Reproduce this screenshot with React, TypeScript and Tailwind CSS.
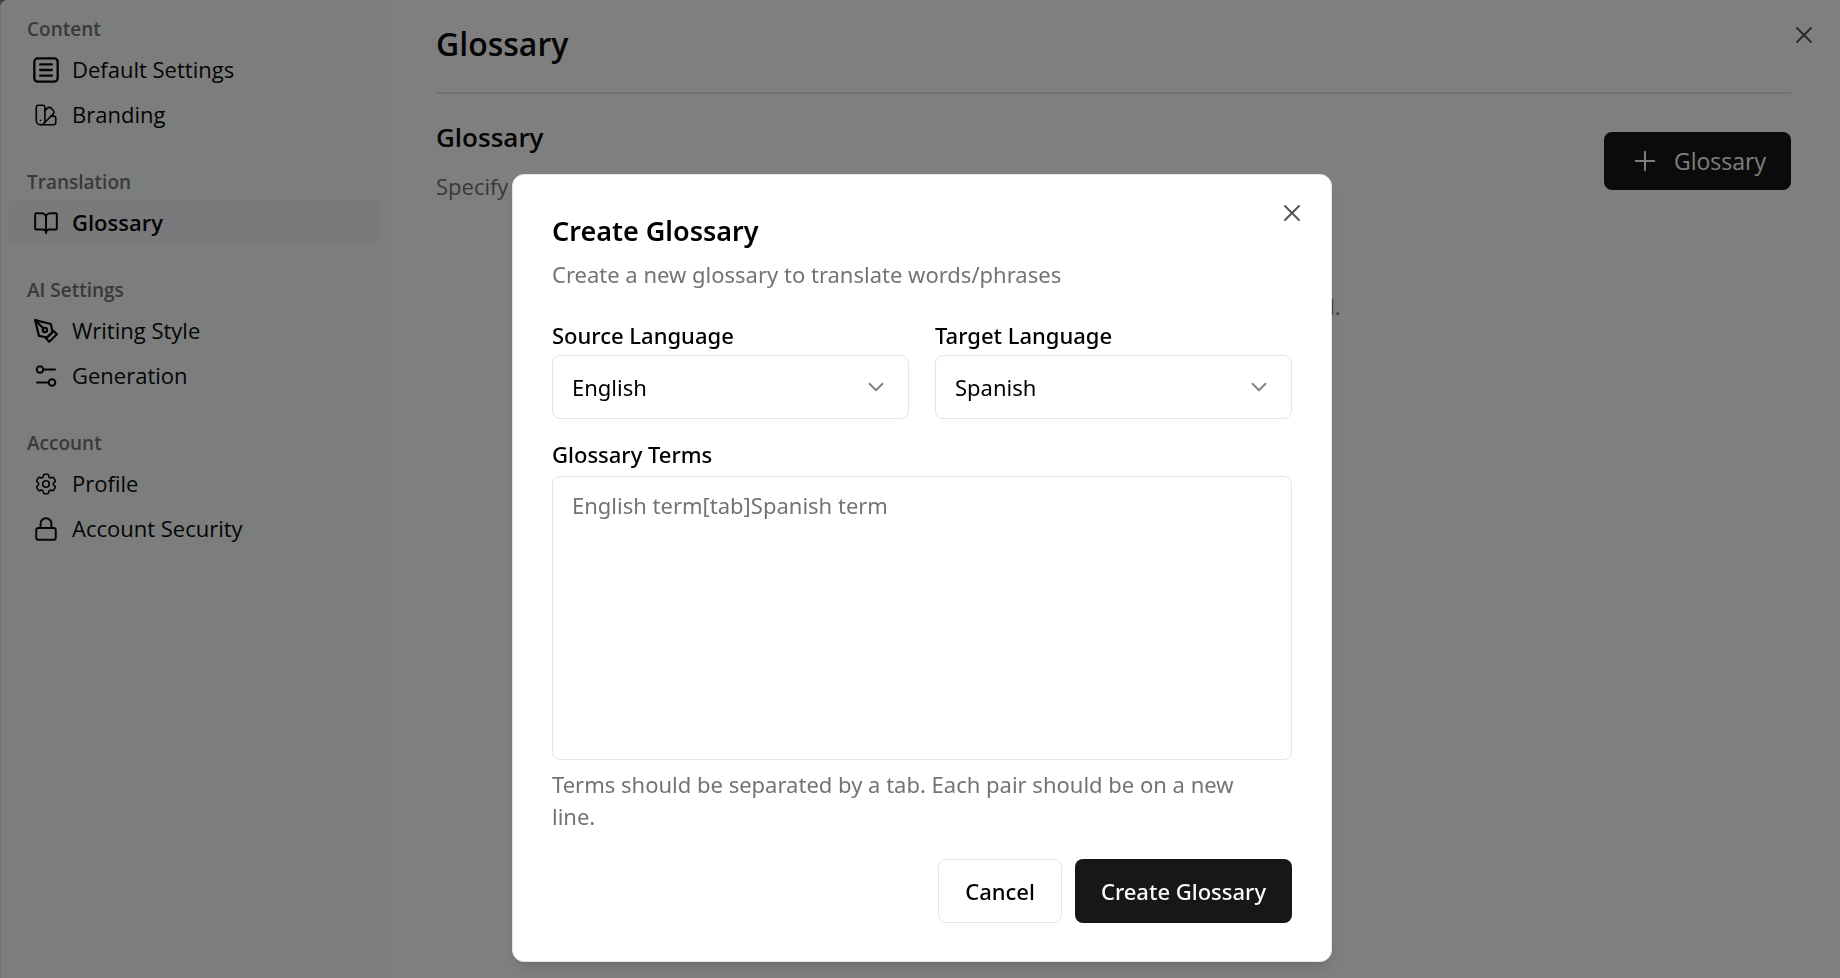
import React from "react";
import { BookOpen, ChevronDown, Lock, Plus, SwatchBook, X } from "lucide-react";

const iconProps = {
  viewBox: "0 0 24 24",
  fill: "none",
  stroke: "currentColor",
  strokeLinecap: "round" as const,
  strokeLinejoin: "round" as const,
  "aria-hidden": true,
};

function ListIcon() {
  return (
    <svg {...iconProps} strokeWidth="2" className="size-7">
      <rect x="2" y="2" width="20" height="20" rx="3" />
      <path d="M7 7.2h10M7 12h10M7 16.8h10" />
    </svg>
  );
}

function PenIcon() {
  return (
    <svg {...iconProps} strokeWidth="2" className="size-[26px]">
      <path d="m12 19 7-7 3 3-7 7-3-3z" />
      <path d="m18 13-1.500-7.500L2 2l3.500 14.500L13 18l5-5z" />
      <path d="m2 2 7.586 7.586" />
      <circle cx="11" cy="11" r="2" />
    </svg>
  );
}

function SlidersIcon() {
  return (
    <svg {...iconProps} strokeWidth="2" className="size-6">
      <circle cx="6" cy="5.500" r="3.300" />
      <circle cx="18" cy="18.500" r="3.300" />
      <path d="M9.300 5.500H21M14.700 18.500H3" />
    </svg>
  );
}

function GearIcon() {
  return (
    <svg {...iconProps} strokeWidth="1.500" className="size-[26px]">
      <path d="M9.594 3.940c.09-.542.560-.940 1.110-.940h2.593c.550 0 1.020.398 1.110.940l.213 1.281c.063.374.313.686.645.870.074.040.147.083.220.127.325.196.720.257 1.075.124l1.217-.456a1.125 1.125 0 0 1 1.370.490l1.296 2.247a1.125 1.125 0 0 1-.260 1.431l-1.003.827c-.293.241-.438.613-.430.992a7.723 7.723 0 0 1 0 .255c-.008.378.137.750.430.991l1.004.827c.424.350.534.955.260 1.430l-1.298 2.247a1.125 1.125 0 0 1-1.369.491l-1.217-.456c-.355-.133-.750-.072-1.076.124a6.470 6.470 0 0 1-.220.128c-.331.183-.581.495-.644.869l-.213 1.281c-.090.543-.560.940-1.110.940h-2.594c-.550 0-1.019-.398-1.110-.940l-.213-1.281c-.062-.374-.312-.686-.644-.870a6.520 6.520 0 0 1-.220-.127c-.325-.196-.720-.257-1.076-.124l-1.217.456a1.125 1.125 0 0 1-1.369-.490l-1.297-2.247a1.125 1.125 0 0 1 .260-1.431l1.004-.827c.292-.240.437-.613.430-.991a6.932 6.932 0 0 1 0-.255c.007-.380-.138-.751-.430-.992l-1.004-.827a1.125 1.125 0 0 1-.260-1.430l1.297-2.247a1.125 1.125 0 0 1 1.370-.491l1.216.456c.356.133.751.072 1.076-.124.072-.044.146-.086.220-.128.332-.183.582-.495.644-.869l.214-1.280Z" />
      <circle cx="12" cy="12" r="3" />
    </svg>
  );
}

const sections = [
  {
    title: "Content",
    items: [
      { label: "Default Settings", icon: <ListIcon /> },
      { label: "Branding", icon: <SwatchBook className="size-[26px]" strokeWidth={1.5} /> },
    ],
  },
  {
    title: "Translation",
    items: [{ label: "Glossary", icon: <BookOpen className="size-[26px]" strokeWidth={1.8} />, active: true }],
  },
  {
    title: "AI Settings",
    items: [
      { label: "Writing Style", icon: <PenIcon /> },
      { label: "Generation", icon: <SlidersIcon /> },
    ],
  },
  {
    title: "Account",
    items: [
      { label: "Profile", icon: <GearIcon /> },
      { label: "Account Security", icon: <Lock className="size-[26px]" strokeWidth={1.8} /> },
    ],
  },
];

function Sidebar() {
  return (
    <nav className="w-[385px] shrink-0 rounded-tl-lg border-l border-[#e0e0e0] bg-[#f9fbfa] pt-[11px] pr-[5px] pl-[7px]" aria-label="Settings">
      {sections.map((section) => (
        <section key={section.title} className="mb-[27px]">
          <h2 className="px-[19px] text-[19px] leading-9 font-semibold text-[#737373]">{section.title}</h2>
          <ul>
            {section.items.map((item) => (
              <li key={item.label}>
                <a
                  href="#"
                  className={
                    "active" in item && item.active
                      ? "flex h-[45px] items-center gap-3 rounded-lg bg-[#f4f4f8] px-6 text-[22px] font-semibold"
                      : "flex h-[45px] items-center gap-3 rounded-lg px-6 text-[22px]"
                  }
                >
                  <span className="flex w-7 justify-center">{item.icon}</span>
                  {item.label}
                </a>
              </li>
            ))}
          </ul>
        </section>
      ))}
    </nav>
  );
}

function LanguageSelect({ id, label, options }: { id: string; label: string; options: string[] }) {
  return (
    <div className="min-w-0 flex-1">
      <label htmlFor={id} className="mb-px block text-[22px] leading-[38px] font-medium">
        {label}
      </label>
      <div className="relative">
        <select id={id} className="block h-16 w-full appearance-none rounded-lg border border-[#e5e5e5] bg-white px-[19px] text-[22px]">
          {options.map((option) => (
            <option key={option}>{option}</option>
          ))}
        </select>
        <ChevronDown
          className="pointer-events-none absolute top-1/2 right-5 size-[26px] -translate-y-1/2 text-[#858585]"
          strokeWidth={1.8}
        />
      </div>
    </div>
  );
}

function CreateGlossaryDialog() {
  return (
    <div className="fixed inset-0 flex items-end justify-center bg-black/50 pb-4">
      <div
        role="dialog"
        aria-modal="true"
        aria-labelledby="dialog-title"
        className="relative ml-1 w-full max-w-[820px] rounded-xl border border-[#e5e5e5] bg-white px-[39px] pt-[37px] pb-[38px] shadow-lg"
      >
        <button type="button" aria-label="Close dialog" className="absolute top-6 right-[25px] text-[#525252]">
          <X className="size-7" strokeWidth={1.6} />
        </button>
        <h2 id="dialog-title" className="text-[27px] leading-[38px] font-semibold">
          Create Glossary
        </h2>
        <p className="mt-2 text-[22px] leading-8 text-[#737373]">Create a new glossary to translate words/phrases</p>
        <form className="mt-[26px]" onSubmit={(event) => event.preventDefault()}>
          <div className="flex gap-[26px]">
            <LanguageSelect id="source" label="Source Language" options={["English", "Spanish"]} />
            <LanguageSelect id="target" label="Target Language" options={["Spanish", "English"]} />
          </div>
          <label htmlFor="terms" className="mt-4 mb-[3px] block text-[22px] leading-[38px] font-medium">
            Glossary Terms
          </label>
          <textarea
            id="terms"
            placeholder="English term[tab]Spanish term"
            className="block h-[284px] w-full resize-none rounded-lg border border-[#e5e5e5] px-[19px] py-3 text-[22px] leading-8 placeholder:text-[#737373]"
          />
          <p className="mt-2 pr-8 text-[22px] leading-8 text-[#737373]">
            Terms should be separated by a tab. Each pair should be on a new line.
          </p>
          <div className="mt-[27px] flex justify-end gap-[13px]">
            <button type="button" className="h-16 rounded-lg border border-[#e5e5e5] px-[26px] text-[22px] font-medium">
              Cancel
            </button>
            <button type="submit" className="h-16 rounded-lg bg-[#171717] px-[26px] text-[22px] font-medium text-[#fafafa]">
              Create Glossary
            </button>
          </div>
        </form>
      </div>
    </div>
  );
}

export default function App() {
  return (
    <div className="bg-[#808080]">
      <div className="flex min-h-screen rounded-tl-lg bg-white font-['Open_Sans',sans-serif] text-[#0a0a0a]">
        <Sidebar />
        <main className="min-w-0 flex-1 pr-[49px] pl-[51px]">
          <header className="flex h-[94px] items-start border-b-2 border-[#e5e5e5]">
            <h1 className="text-[32px] leading-[88px] font-semibold">Glossary</h1>
            <button type="button" aria-label="Close settings" className="absolute top-[21px] right-[22px] text-[#525252]">
              <X className="size-7" strokeWidth={1.6} />
            </button>
          </header>
          <div className="mt-[25px] flex items-start justify-between">
            <div>
              <h2 className="text-[26px] leading-9 font-semibold">Glossary</h2>
              <p className="mt-[15px] text-[22px] leading-8 text-[#737373]">Specify</p>
            </div>
            <button
              type="button"
              className="mt-[13px] flex h-[58px] items-center gap-[13px] rounded-lg bg-[#171717] px-[25px] text-[23px] text-[#fafafa]"
            >
              <Plus className="size-8" strokeWidth={1.5} />
              Glossary
            </button>
          </div>
          <p className="mx-auto mt-[88px] max-w-[454px] text-right text-[22px] leading-8 text-[#737373]">l.</p>
        </main>
      </div>
      <CreateGlossaryDialog />
    </div>
  );
}
